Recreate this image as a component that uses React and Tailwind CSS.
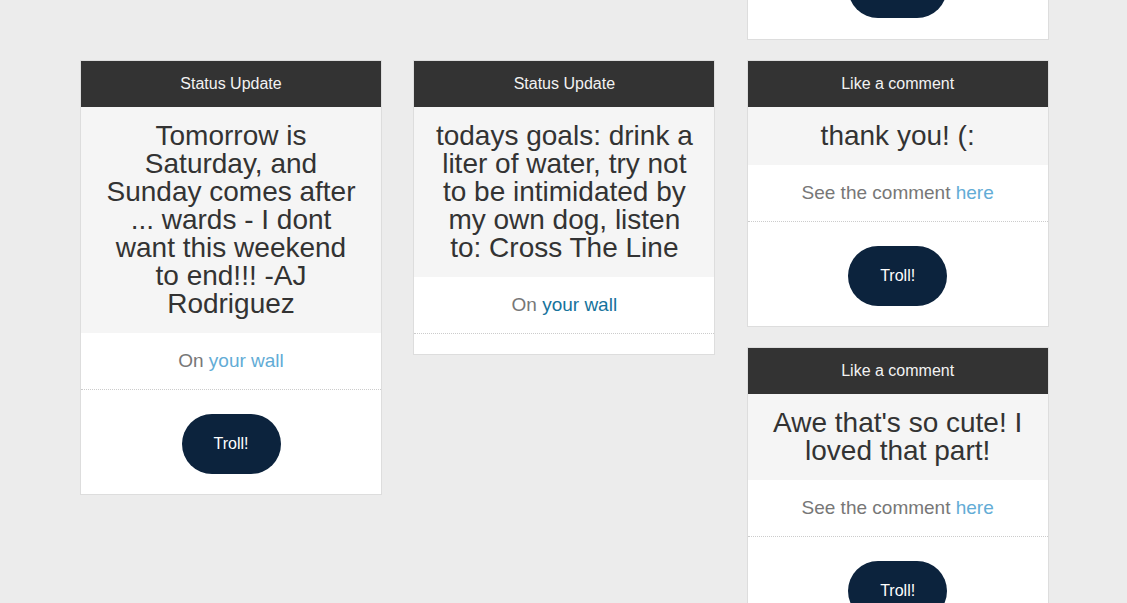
import React from 'react';

const font = { fontFamily: '"Liberation Sans", Arial, sans-serif' };

const TrollButton = ({ label = 'Troll!' }) => (
  <button className="w-[99px] h-[60px] rounded-full bg-[#0c233d] text-white text-base">
    {label}
  </button>
);

const Card = ({ title, body, prefix, link, linkClass = 'text-[#62acd6]', button = true }) => (
  <div className="w-[302px] bg-white border border-[#dddddd]">
    <div className="h-[46px] bg-[#333333] text-[#f2f2f2] text-base flex items-center justify-center">
      {title}
    </div>
    <div className="bg-[#f5f5f5] py-[15px] px-5 text-center text-[28px] leading-[28px] text-[#333333]">
      {body}
    </div>
    <div className="h-[57px] border-b border-dotted border-[#cccccc] flex items-center justify-center text-[19px] text-[#777777]">
      <span>
        {prefix} <span className={linkClass}>{link}</span>
      </span>
    </div>
    <div className="py-[10px] flex justify-center">
      {button && (
        <div className="mt-[14px] mb-[10px]">
          <TrollButton />
        </div>
      )}
    </div>
  </div>
);

export default function App() {
  return (
    <div className="min-h-screen bg-[#ececec] overflow-hidden" style={font}>
      <div className="w-[1000px] ml-[64px] grid grid-cols-3 h-[603px] overflow-hidden">
        {/* Column 1 */}
        <div className="px-4 pt-[60px] flex flex-col gap-5">
          <Card
            title="Status Update"
            body="Tomorrow is Saturday, and Sunday comes after ... wards - I dont want this weekend to end!!! -AJ Rodriguez"
            prefix="On"
            link="your wall"
          />
        </div>

        {/* Column 2 */}
        <div className="px-4 pt-[60px] flex flex-col gap-5">
          <Card
            title="Status Update"
            body="todays goals: drink a liter of water, try not to be intimidated by my own dog, listen to: Cross The Line"
            prefix="On"
            link="your wall"
            linkClass="text-[#16739c]"
            button={false}
          />
        </div>

        {/* Column 3 */}
        <div className="px-4 flex flex-col gap-5">
          <div className="w-[302px] h-[40px] bg-white border border-t-0 border-[#dddddd] overflow-hidden flex justify-center">
            <div className="-mt-[42px]">
              <TrollButton label="" />
            </div>
          </div>
          <Card
            title="Like a comment"
            body="thank you! (:"
            prefix="See the comment"
            link="here"
          />
          <Card
            title="Like a comment"
            body="Awe that's so cute! I loved that part!"
            prefix="See the comment"
            link="here"
          />
        </div>
      </div>
    </div>
  );
}
